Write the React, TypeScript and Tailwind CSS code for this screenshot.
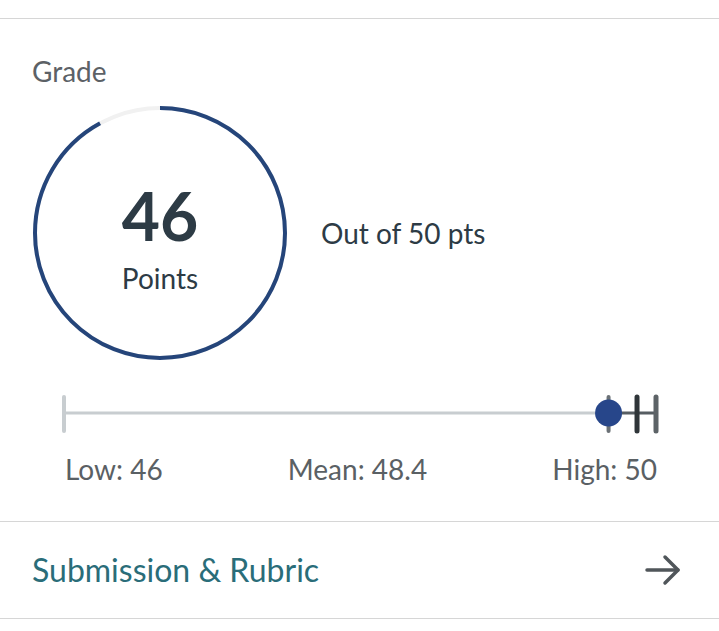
import React from 'react';

const R = 125;
const C = 2 * Math.PI * R;

function GradeRing({ score, total }: { score: number; total: number }) {
  const pct = score / total;
  return (
    <div className="relative h-[256px] w-[256px] shrink-0">
      <svg width="256" height="256" viewBox="0 0 256 256" className="absolute inset-0">
        <circle cx="128" cy="128" r={R} fill="none" stroke="#f1f1f1" strokeWidth="4" />
        <circle
          cx="128"
          cy="128"
          r={R}
          fill="none"
          stroke="#25457a"
          strokeWidth="4"
          strokeDasharray={`${C * pct} ${C}`}
          transform="rotate(-90 128 128)"
        />
      </svg>
      <div className="relative flex h-full flex-col items-center justify-center pt-[11px]">
        <span className="text-[66px] font-bold leading-none text-[#2d3b45]">{score}</span>
        <span className="mt-[12px] text-[28px] leading-[34px] text-[#2d3b45]">Points</span>
      </div>
    </div>
  );
}

function BoxPlot() {
  // 0 at x=3, 50 at x=596 (svg coords)
  const x = (v: number) => 3 + (v / 50) * 593;
  return (
    <svg width="600" height="40" viewBox="0 0 600 40" className="ml-[28px] block">
      <line x1={x(0)} y1="19" x2={x(46)} y2="19" stroke="#c8cdd0" strokeWidth="3" />
      <line x1="4" y1="3" x2="4" y2="37" stroke="#c8cdd0" strokeWidth="4" strokeLinecap="round" />
      <line x1={x(46)} y1="19" x2={x(50)} y2="19" stroke="#565d62" strokeWidth="3" />
      <line x1={x(46)} y1="3" x2={x(46)} y2="37" stroke="#6b7176" strokeWidth="4" strokeLinecap="round" />
      <line x1={x(48.4)} y1="3" x2={x(48.4)} y2="37" stroke="#2f3539" strokeWidth="5" strokeLinecap="round" />
      <line x1={x(50)} y1="3" x2={x(50)} y2="37" stroke="#5d6367" strokeWidth="5" strokeLinecap="round" />
      <circle cx={x(46)} cy="19" r="13.5" fill="#27468a" />
    </svg>
  );
}

export default function App() {
  return (
    <div className="min-h-[631px] w-full bg-white" style={{ fontFamily: 'Lato, "Open Sans", sans-serif' }}>
      <div className="h-[19px] border-b border-[#d6d6d6]" />
      <div className="px-8 pt-[35px]">
        <div className="text-[28px] leading-[34px] text-[#5c6166]">Grade</div>
        <div className="mt-[17px] flex items-center">
          <GradeRing score={46} total={50} />
          <span className="ml-[33px] text-[28px] leading-[34px] text-[#2d3b45]">Out of 50 pts</span>
        </div>
        <div className="mt-[33px]">
          <BoxPlot />
        </div>
        <div className="ml-[33px] mr-[30px] mt-[18px] flex justify-between text-[28px] leading-[34px] text-[#5a6064]">
          <span>Low: 46</span>
          <span>Mean: 48.4</span>
          <span>High: 50</span>
        </div>
      </div>
      <div className="mt-[35px] flex h-[98px] items-center justify-between border-y border-[#d6d6d6] pl-8 pr-[38px]">
        <span className="text-[32px] leading-[38px] text-[#2a6d79]">Submission &amp; Rubric</span>
        <svg width="36" height="32" viewBox="0 0 36 32" fill="none">
          <path d="M2 16H33" stroke="#50565a" strokeWidth="3.5" strokeLinecap="round" />
          <path d="M20 3L33 16L20 29" stroke="#50565a" strokeWidth="3.5" strokeLinecap="round" strokeLinejoin="round" />
        </svg>
      </div>
    </div>
  );
}
